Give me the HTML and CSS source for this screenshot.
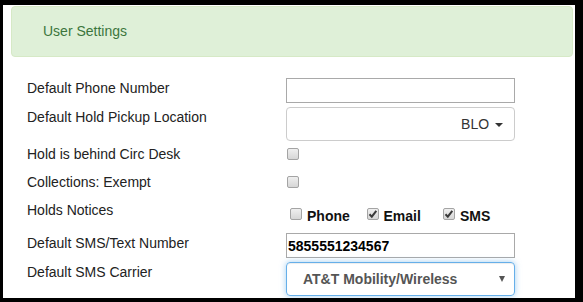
FILE: index.html
```
<!DOCTYPE html>
<html>
	<head>
		<meta charset="UTF-8">
		<title>User Settings</title>
		<link rel="stylesheet" href="styles.css">
	</head>
	<body>
		<div class="frame">
			<div class="alert">User Settings</div>
			<form class="settings">
				<div class="row row-phone">
					<label>Default Phone Number</label>
					<input type="text" class="text">
				</div>
				<div class="row row-pickup">
					<label>Default Hold Pickup Location</label>
					<div class="dropdown">BLO <span class="caret"></span></div>
				</div>
				<div class="row row-check">
					<label>Hold is behind Circ Desk</label>
					<div class="cell"><span class="box"></span></div>
				</div>
				<div class="row row-check">
					<label>Collections: Exempt</label>
					<div class="cell"><span class="box"></span></div>
				</div>
				<div class="row row-notices">
					<label>Holds Notices</label>
					<div class="options">
						<div class="option"><span class="box"></span>Phone</div>
						<div class="option"><span class="box checked"><svg width="10" height="10" viewBox="0 0 10 10"><path d="M1.5 5.2 L3.8 7.6 L8.3 1.8" fill="none" stroke="#3a3a3a" stroke-width="2"/></svg></span>Email</div>
						<div class="option"><span class="box checked"><svg width="10" height="10" viewBox="0 0 10 10"><path d="M1.5 5.2 L3.8 7.6 L8.3 1.8" fill="none" stroke="#3a3a3a" stroke-width="2"/></svg></span>SMS</div>
					</div>
				</div>
				<div class="row row-sms">
					<label>Default SMS/Text Number</label>
					<input type="text" class="text bold" value="5855551234567">
				</div>
				<div class="row row-carrier">
					<label>Default SMS Carrier</label>
					<div class="select-focus">
						<span>AT&amp;T Mobility/Wireless</span>
						<span class="arrow"></span>
					</div>
				</div>
			</form>
		</div>
	</body>
</html>
```
FILE: styles.css
```
html,
body {
	margin: 0;
}

body {
	background: #000;
	padding: 5px 8px 4px 3px;
	height: 302px;
	box-sizing: border-box;
	font-family: "Liberation Sans", Arial, sans-serif;
	font-size: 14px;
	color: #333;
}

.frame {
	background: #fff;
	height: 293px;
	overflow: hidden;
	padding: 1px 2px 0 8px;
	box-sizing: border-box;
}

.alert {
	height: 51px;
	box-sizing: border-box;
	background: #dff0d8;
	border: 1px solid #d6e9c6;
	border-radius: 4px;
	color: #3c763d;
	line-height: 49px;
	padding-left: 31px;
}

.settings {
	margin-top: 21px;
	padding-left: 16px;
}

.row {
	display: grid;
	grid-template-columns: 259px 229px;
	align-items: start;
}

.row>label {
	line-height: 20px;
	color: #222;
}

.row-phone {
	height: 29px;
}

.row-pickup {
	height: 37px;
}

.row-check {
	height: 28px;
}

.row-notices {
	height: 33px;
}

.row-sms {
	height: 29px;
}

.row-carrier {
	height: 40px;
}

.text {
	width: 229px;
	height: 25px;
	box-sizing: border-box;
	border: 1px solid #a9a9a9;
	padding: 1px 1px;
	margin: 0;
	font-family: inherit;
	font-size: 14px;
	color: #000;
	outline: none;
}

.text.bold {
	font-weight: bold;
}

.dropdown {
	height: 34px;
	box-sizing: border-box;
	border: 1px solid #ccc;
	border-radius: 4px;
	text-align: right;
	padding-right: 11px;
	line-height: 32px;
	color: #333;
}

.caret {
	display: inline-block;
	width: 0;
	height: 0;
	margin-left: 2px;
	vertical-align: middle;
	border-top: 4px solid #333;
	border-left: 4px solid transparent;
	border-right: 4px solid transparent;
}

.cell {
	padding: 4px 0 0 1px;
}

.box {
	display: inline-block;
	width: 12px;
	height: 12px;
	box-sizing: border-box;
	border: 1px solid #a4a4a4;
	border-radius: 2px;
	background: linear-gradient(#efefef, #d6d6d6);
	position: relative;
	vertical-align: top;
}

.box svg {
	position: absolute;
	left: 0;
	top: 0;
}

.options {
	display: flex;
	padding: 6px 0 0 4px;
	line-height: 20px;
	font-weight: bold;
	color: #111;
}

.option {
	width: 76.5px;
	flex: none;
}

.option .box {
	margin: 2px 5px 0 0;
}

.select-focus {
	height: 34px;
	box-sizing: border-box;
	border: 1px solid #66afe9;
	border-radius: 4px;
	box-shadow: inset 0 1px 1px rgba(0, 0, 0, .075), 0 0 6px rgba(102, 175, 233, .6);
	display: flex;
	justify-content: space-between;
	align-items: center;
	padding: 0 9px 0 16px;
	font-weight: bold;
	color: #555;
}

.arrow {
	width: 0;
	height: 0;
	border-top: 6px solid #555;
	border-left: 3.5px solid transparent;
	border-right: 3.5px solid transparent;
}
```
